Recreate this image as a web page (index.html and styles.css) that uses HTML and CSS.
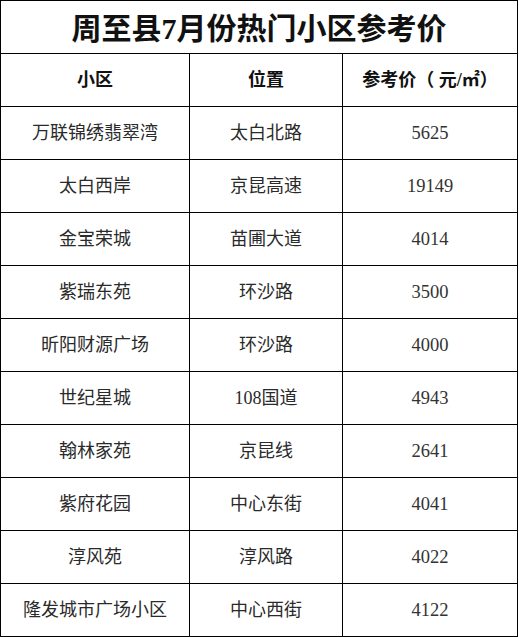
FILE: index.html
```html
<!DOCTYPE html>
<html lang="zh-CN">
<head>
<meta charset="utf-8">
<title>周至县7月份热门小区参考价</title>
<link rel="stylesheet" href="styles.css">
</head>
<body>
<div class="sheet">
  <div class="cell title">周至县7月份热门小区参考价</div>
  <div class="cell head">小区</div>
  <div class="cell head">位置</div>
  <div class="cell head">参考价（ 元/㎡）</div>

  <div class="cell">万联锦绣翡翠湾</div><div class="cell">太白北路</div><div class="cell num">5625</div>
  <div class="cell">太白西岸</div><div class="cell">京昆高速</div><div class="cell num">19149</div>
  <div class="cell">金宝荣城</div><div class="cell">苗圃大道</div><div class="cell num">4014</div>
  <div class="cell">紫瑞东苑</div><div class="cell">环沙路</div><div class="cell num">3500</div>
  <div class="cell">昕阳财源广场</div><div class="cell">环沙路</div><div class="cell num">4000</div>
  <div class="cell">世纪星城</div><div class="cell">108国道</div><div class="cell num">4943</div>
  <div class="cell">翰林家苑</div><div class="cell">京昆线</div><div class="cell num">2641</div>
  <div class="cell">紫府花园</div><div class="cell">中心东街</div><div class="cell num">4041</div>
  <div class="cell">淳风苑</div><div class="cell">淳风路</div><div class="cell num">4022</div>
  <div class="cell">隆发城市广场小区</div><div class="cell">中心西街</div><div class="cell num">4122</div>
</div>
</body>
</html>
```

FILE: styles.css
```css
html, body {
  margin: 0;
  padding: 0;
  background: #ffffff;
}

.sheet {
  display: grid;
  grid-template-columns: 189px 153px 175px;
  grid-auto-rows: 53px;
  width: max-content;
  border-top: 1px solid #000;
  border-left: 1px solid #000;
  font-family: "Liberation Serif", "Noto Sans CJK SC", serif;
  color: #2a2a2a;
}

.cell {
  display: flex;
  align-items: center;
  justify-content: center;
  border-right: 1px solid #000;
  border-bottom: 1px solid #000;
  font-size: 18px;
  line-height: 1;
  white-space: nowrap;
}

.title {
  grid-column: 1 / 4;
  font-size: 30px;
  font-weight: 700;
  color: #111;
  padding-top: 3px;
  box-sizing: border-box;
}

.head {
  font-weight: 700;
  color: #111;
  font-size: 18px;
}

.num {
  font-size: 18.5px;
  color: #333;
}
```
